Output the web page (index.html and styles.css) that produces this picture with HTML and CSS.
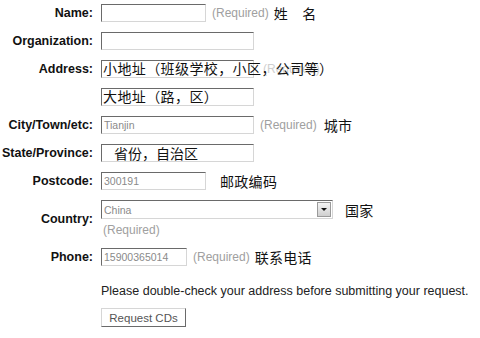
FILE: index.html
```html
<!DOCTYPE html>
<html lang="en">
<head>
    <meta charset="UTF-8">
    <title>Request CDs</title>
    <link rel="stylesheet" href="styles.css">
</head>
<body>
    <form class="request-form">
        <div class="row">
            <label class="label">Name:</label>
            <div class="field">
                <span class="input w-short"></span>
                <span class="req">(Required)</span>
                <span class="note-cn">姓　名</span>
            </div>
        </div>

        <div class="row">
            <label class="label">Organization:</label>
            <div class="field">
                <span class="input w-long"></span>
            </div>
        </div>

        <div class="row">
            <label class="label">Address:</label>
            <div class="field overlay-wrap">
                <span class="input w-long"></span>
                <span class="req faded">(Required)</span>
                <span class="overlay">小地址（班级学校，小区，公司等）</span>
            </div>
        </div>

        <div class="row">
            <label class="label"></label>
            <div class="field overlay-wrap">
                <span class="input w-long"></span>
                <span class="overlay">大地址（路，区）</span>
            </div>
        </div>

        <div class="row">
            <label class="label">City/Town/etc:</label>
            <div class="field">
                <span class="input w-long"><span class="value">Tianjin</span></span>
                <span class="req">(Required)</span>
                <span class="note-cn city">城市</span>
            </div>
        </div>

        <div class="row">
            <label class="label">State/Province:</label>
            <div class="field">
                <span class="input w-long"><span class="value-cn">省份，自治区</span></span>
            </div>
        </div>

        <div class="row">
            <label class="label">Postcode:</label>
            <div class="field">
                <span class="input w-short"><span class="value">300191</span></span>
                <span class="note-cn post">邮政编码</span>
            </div>
        </div>

        <div class="row country-row">
            <label class="label">Country:</label>
            <div class="field-stack">
                <div class="field">
                    <span class="select"><span class="value">China</span><span class="arrow"></span></span>
                    <span class="note-cn country">国家</span>
                </div>
                <span class="req under">(Required)</span>
            </div>
        </div>

        <div class="row">
            <label class="label">Phone:</label>
            <div class="field">
                <span class="input w-phone"><span class="value">15900365014</span></span>
                <span class="req">(Required)</span>
                <span class="note-cn">联系电话</span>
            </div>
        </div>

        <p class="hint">Please double-check your address before submitting your request.</p>

        <button type="button" class="btn">Request CDs</button>
    </form>
</body>
</html>
```

FILE: styles.css
```css
body {
    margin: 0;
    background: #fff;
    font-family: "Liberation Sans", Arial, sans-serif;
    color: #111;
}

.request-form {
    padding: 4px 0 0 0;
}

.row {
    display: flex;
    align-items: center;
    height: 18px;
    margin-bottom: 10px;
}

.label {
    width: 93px;
    margin-right: 8px;
    text-align: right;
    font-weight: bold;
    font-size: 12.5px;
    color: #111;
    white-space: nowrap;
}

.field {
    display: flex;
    align-items: center;
}

.overlay-wrap {
    position: relative;
}

/* inset text boxes */
.input {
    display: flex;
    align-items: center;
    box-sizing: border-box;
    height: 18px;
    border: 1px solid #d6d6d6;
    border-top-color: #6a6a6a;
    border-left-color: #6a6a6a;
    background: #fff;
}

.w-short { width: 105px; }
.w-long  { width: 153px; }
.w-phone { width: 86px; }

.value {
    padding-left: 2px;
    font-size: 10.5px;
    color: #8a8a8a;
}

.value-cn {
    padding-left: 12px;
    font-family: "Noto Sans CJK SC", sans-serif;
    font-size: 14px;
    color: #111;
}

.req {
    margin-left: 6px;
    font-size: 12px;
    color: #a0a0a0;
}

.req.faded {
    margin-left: 9px;
    color: #cfcfcf;
}

.overlay {
    position: absolute;
    left: 2px;
    top: -1px;
    font-family: "Noto Sans CJK SC", sans-serif;
    font-size: 14px;
    letter-spacing: 0.4px;
    line-height: 18px;
    color: #111;
    white-space: nowrap;
}

.note-cn {
    margin-left: 5px;
    font-family: "Noto Sans CJK SC", sans-serif;
    font-size: 14px;
    letter-spacing: 0.3px;
    color: #111;
}

.note-cn.city { margin-left: 7px; }
.note-cn.post { margin-left: 14px; }
.note-cn.country { margin-left: 12px; }

/* country */
.country-row {
    height: 38px;
}

.field-stack {
    display: flex;
    flex-direction: column;
}

.select {
    display: flex;
    align-items: center;
    justify-content: space-between;
    box-sizing: border-box;
    width: 232px;
    height: 19px;
    border: 1px solid #d6d6d6;
    border-top-color: #6a6a6a;
    border-left-color: #6a6a6a;
}

.arrow {
    position: relative;
    width: 12px;
    height: 13px;
    margin-right: 1px;
    border: 1px solid #9a9a9a;
    background: linear-gradient(#f4f4f4, #cfcfcf);
}

.arrow::after {
    content: "";
    position: absolute;
    left: 3px;
    top: 5px;
    border-left: 3px solid transparent;
    border-right: 3px solid transparent;
    border-top: 3px solid #111;
}

.req.under {
    margin: 1px 0 0 2px;
    font-size: 12px;
    line-height: 18px;
}

.hint {
    margin: 18px 0 0 101px;
    font-size: 12.5px;
    color: #222;
}

.btn {
    display: block;
    margin: 10px 0 0 101px;
    width: 85px;
    height: 19px;
    padding: 0;
    font-family: "Liberation Sans", Arial, sans-serif;
    font-size: 11.5px;
    color: #555;
    background: #fff;
    border: 1px solid #6a6a6a;
    border-top-color: #d6d6d6;
    border-left-color: #d6d6d6;
}
```
